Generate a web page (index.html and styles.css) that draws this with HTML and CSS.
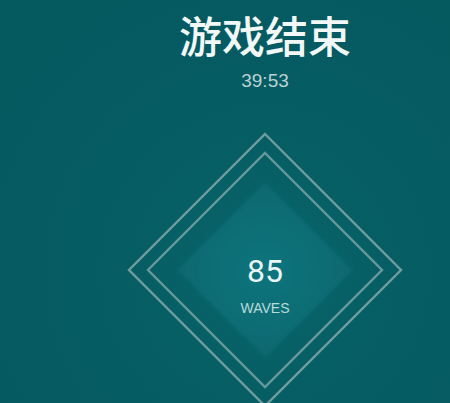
FILE: index.html
```html
<!DOCTYPE html>
<html lang="zh">
<head>
<meta charset="utf-8">
<link rel="stylesheet" href="styles.css">
</head>
<body>
<main class="screen">
  <h1 class="title">游戏结束</h1>
  <div class="time">39:53</div>
  <div class="badge">
    <svg class="diamonds" width="280" height="280" viewBox="0 0 280 280">
      <defs>
        <radialGradient id="core" cx="50%" cy="50%" r="60%">
          <stop offset="0%" stop-color="#0d747c"/>
          <stop offset="55%" stop-color="#0b6d75"/>
          <stop offset="100%" stop-color="#08656c"/>
        </radialGradient>
        <filter id="soft" x="-10%" y="-10%" width="120%" height="120%">
          <feGaussianBlur stdDeviation="2"/>
        </filter>
        <filter id="line" x="-5%" y="-5%" width="110%" height="110%">
          <feGaussianBlur stdDeviation="0.4"/>
        </filter>
      </defs>
      <polygon points="140,52 228,140 140,228 52,140" fill="url(#core)" filter="url(#soft)"/>
      <g filter="url(#line)">
        <polygon points="140,4 276,140 140,276 4,140" fill="none" stroke="#8aabac" stroke-opacity="0.8" stroke-width="2.4"/>
        <polygon points="140,23 257,140 140,257 23,140" fill="none" stroke="#8aabac" stroke-opacity="0.75" stroke-width="2.4"/>
      </g>
    </svg>
    <div class="score">
      <div class="num">85</div>
      <div class="label">WAVES</div>
    </div>
  </div>
</main>
</body>
</html>
```

FILE: styles.css
```css
html, body {
  margin: 0;
  padding: 0;
  width: 450px;
  height: 403px;
  overflow: hidden;
}
body {
  background: radial-gradient(circle at 265px 270px, #08656b 0%, #07606767 40%, #055a60 80%), #055a60;
}
.screen {
  display: flex;
  flex-direction: column;
  align-items: center;
  padding-left: 80px;
  width: 370px;
}
.title {
  margin: 12px 0 0;
  font-family: "Noto Sans CJK SC", "Noto Sans", sans-serif;
  font-weight: 500;
  font-size: 43px;
  line-height: 44px;
  color: #f2f7f7;
}
.time {
  margin-top: 15px;
  font-family: "Liberation Sans", Arial, sans-serif;
  font-size: 19px;
  line-height: 19px;
  color: #b9d2d2;
}
.badge {
  margin-top: 40px;
  display: grid;
  justify-items: center;
}
.diamonds {
  grid-area: 1 / 1;
  display: block;
}
.score {
  grid-area: 1 / 1;
  display: flex;
  flex-direction: column;
  align-items: center;
  padding-top: 125px;
}
.num {
  font-family: Roboto, "Liberation Sans", sans-serif;
  font-weight: 400;
  font-size: 32px;
  line-height: 32px;
  color: #eaf6f6;
}
.label {
  margin-top: 14px;
  font-family: "Liberation Sans", Arial, sans-serif;
  font-size: 14px;
  line-height: 14px;
  color: #b9dada;
}
```
